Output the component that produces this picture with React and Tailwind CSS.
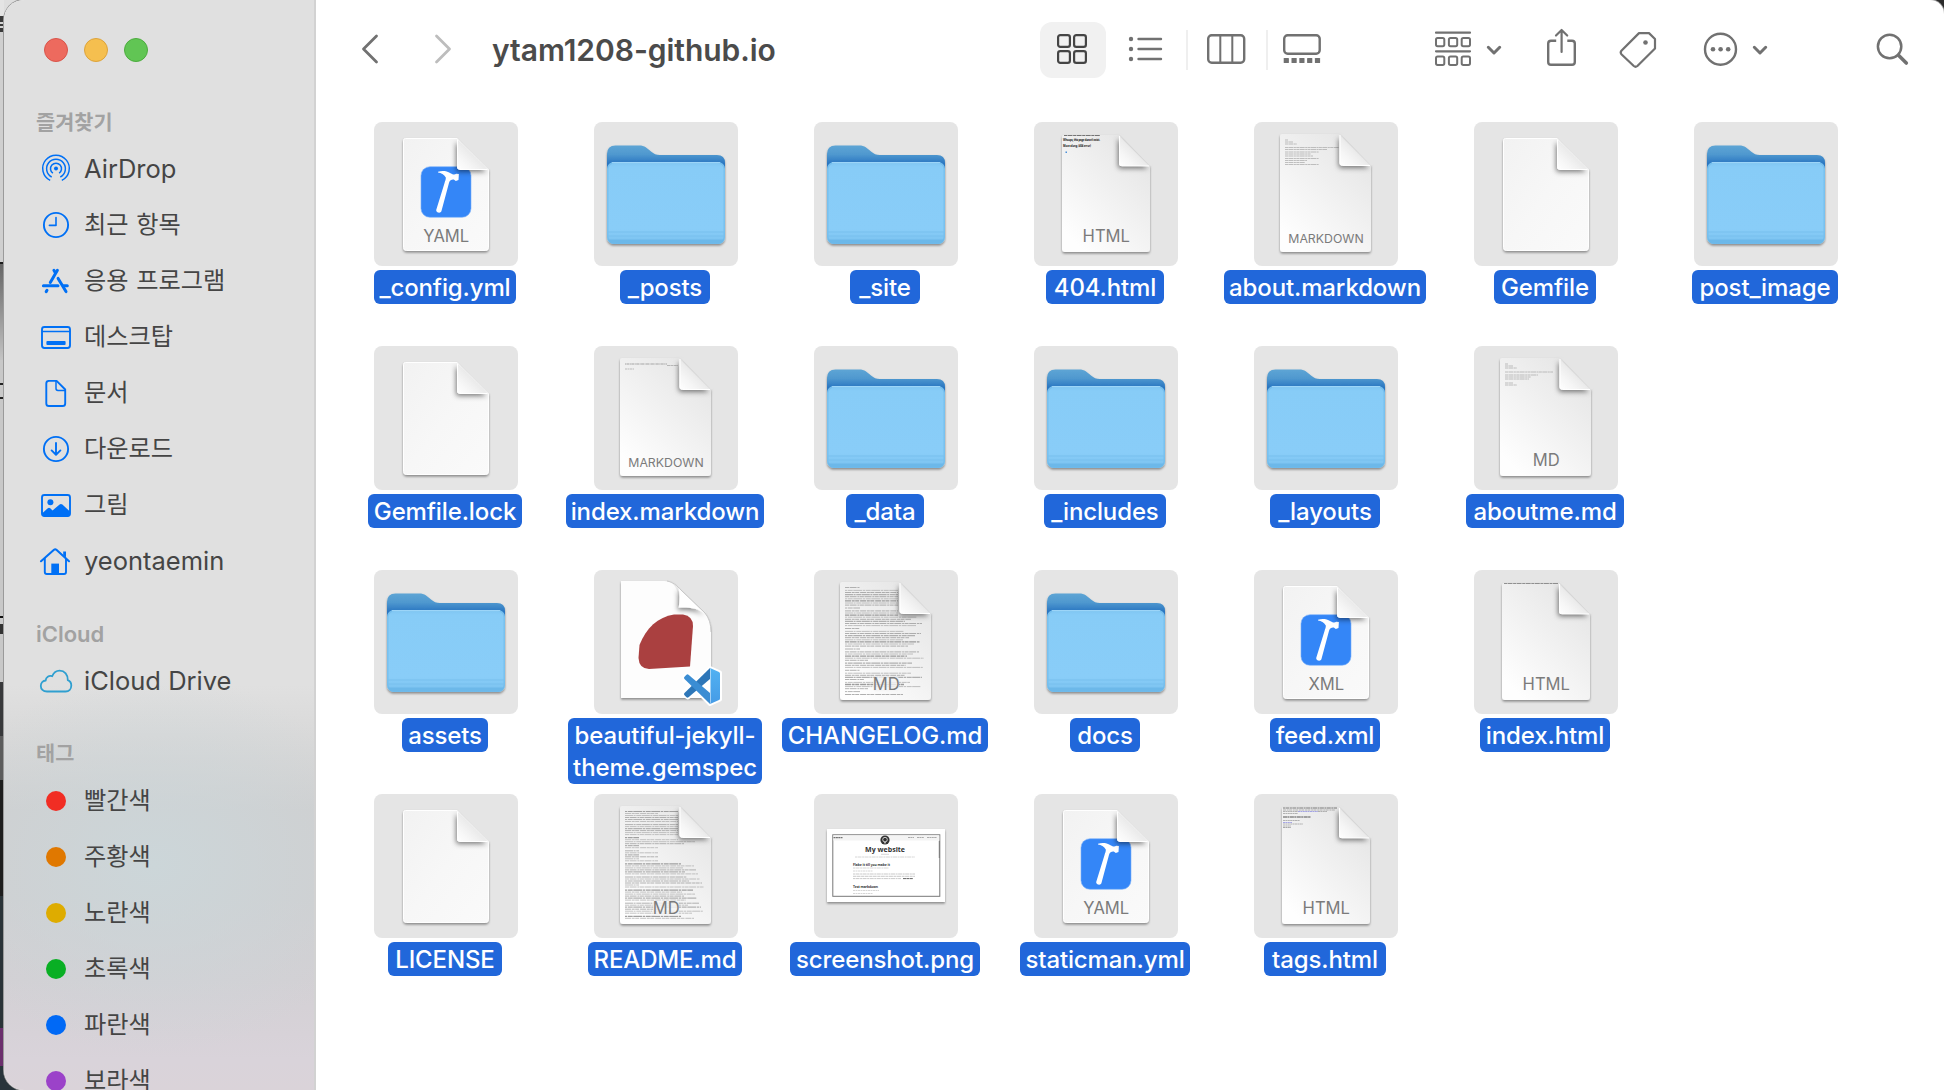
import React from "react";

const SANS = "font-['Inter','Noto_Sans_CJK_KR',sans-serif]";

/* ---------- sidebar icons (32 x 32) ---------- */

const line = { fill: "none", stroke: "currentColor", strokeWidth: 1.9, strokeLinecap: "round", strokeLinejoin: "round" };

const sideIcons = {
  airdrop: (
    <g {...line} strokeWidth="1.5" strokeLinecap="butt">
      <circle cx="16" cy="15.5" r="2" fill="currentColor" stroke="none" />
      <path d="M12.9 20.2a5.5 5.5 0 1 1 6.2 0" />
      <path d="M11.7 24a9.4 9.4 0 1 1 8.6 0" />
      <path d="M10.2 27.4a13.3 13.3 0 1 1 11.6 0" />
    </g>
  ),
  clock: (
    <g {...line}>
      <circle cx="16" cy="16" r="12.1" />
      <path d="M16 8.6V16.4H9.4" strokeWidth="1.6" />
    </g>
  ),
  apps: (
    <g fill="none" stroke="currentColor" strokeWidth="3" strokeLinecap="round">
      <path d="M17.4 5.3 10.3 17.5" />
      <path d="M13.9 5.3 15.2 7.5" />
      <path d="M18.1 13.4 26 26.6" />
      <path d="M3.4 20.8H18M23.5 20.8H27.3" />
      <path d="M7 25.3 6.2 26.6" />
    </g>
  ),
  desktop: (
    <g {...line}>
      <rect x="2" y="6" width="28" height="21" rx="2.4" />
      <path d="M2.5 10.4H29.5" strokeWidth="1.5" />
      <rect x="6.4" y="20" width="19.2" height="4" rx="1" fill="currentColor" stroke="none" />
    </g>
  ),
  doc: (
    <g {...line}>
      <path d="M8.3 3.9H16.6L25.2 12.5V26.4Q25.2 29 22.6 29H8.9Q6.3 29 6.3 26.4V6.4Q6.3 3.9 8.9 3.9Z" />
      <path d="M16 4.2V11.5Q16 13.4 18 13.4H25" strokeWidth="1.5" />
    </g>
  ),
  download: (
    <g {...line}>
      <circle cx="16" cy="16" r="12.1" />
      <path d="M16 10V21.4M11.6 17.4 16 21.7 20.4 17.4" />
    </g>
  ),
  picture: (
    <g>
      <rect x="2" y="6" width="28" height="21" rx="2.4" {...line} />
      <circle cx="10.4" cy="13.3" r="3" fill="currentColor" />
      <path d="M2 24.5 7.8 19.3Q9 18.3 10.2 19.3L12.6 21.4 19.6 15.4Q21 14.3 22.4 15.6L30 22.6V25Q30 27.4 27.6 27.4H4.4Q2 27.4 2 25Z" fill="currentColor" />
    </g>
  ),
  home: (
    <g {...line}>
      <path d="M1 16.2 14 4.8Q15.2 3.8 16.4 4.8L29 16.2" strokeWidth="2.1" />
      <path d="M4.8 13.6V27Q4.8 29 6.8 29H24Q26 29 26 27V13.6" />
      <path d="M23.2 6.4H26V12.6L23.2 10Z" fill="currentColor" stroke="none" />
      <path d="M11.3 18.6H19V29H11.3Z" fill="currentColor" stroke="none" />
    </g>
  ),
  cloud: (
    <path
      d="M7 26.5C3 26.5.8 24 .8 20.9.8 17.8 3 15.7 5.7 15.5 5.7 12.2 9 10 12.2 11.2 13.7 7.6 16.6 5.7 19.6 5.7 24.6 5.7 28 9.5 27.8 15.2 30.2 16.1 31.3 18.3 31.3 20.6 31.3 24 29 26.5 25.6 26.5Z"
      {...line}
      strokeWidth="1.8"
    />
  ),
};

const favorites = [
  ["airdrop", "AirDrop"],
  ["clock", "최근 항목"],
  ["apps", "응용 프로그램"],
  ["desktop", "데스크탑"],
  ["doc", "문서"],
  ["download", "다운로드"],
  ["picture", "그림"],
  ["home", "yeontaemin"],
];

const tags = [
  ["bg-[#f12d24]", "빨간색"],
  ["bg-[#e07800]", "주황색"],
  ["bg-[#deac00]", "노란색"],
  ["bg-[#09af24]", "초록색"],
  ["bg-[#0069f6]", "파란색"],
  ["bg-[#9b42c9]", "보라색"],
];

function SideLabel({ text }) {
  const latin = /^[A-Za-z ]+$/.test(text);
  return (
    <span
      className={
        latin
          ? "text-[25.5px] leading-none text-[#454545]"
          : "text-[24.2px] leading-none [word-spacing:1px] text-[#454545]"
      }
    >
      {text}
    </span>
  );
}

function SideRow({ icon, text, tone = "text-[#0070f5]" }) {
  return (
    <li className="flex h-14 items-center gap-3 pl-9">
      <svg viewBox="0 0 32 32" className={"h-8 w-8 shrink-0 overflow-visible " + tone}>{sideIcons[icon]}</svg>
      <SideLabel text={text} />
    </li>
  );
}

function SideHeading({ children, className = "" }) {
  return <h2 className={"flex h-10 shrink-0 items-center pl-8 pt-0.5 leading-none text-[#a2a2a2] " + className}>{children}</h2>;
}

function Sidebar() {
  return (
    <aside className="flex w-[312px] shrink-0 flex-col overflow-hidden border-r-2 border-[#d2d2d2] bg-[radial-gradient(230px_190px_at_150px_865px,rgba(204,214,217,1),rgba(204,214,217,0)),linear-gradient(180deg,#e0e0e0_0px,#e0e0e0_685px,#d9d9d9_735px,#cfcfd0_810px,#cfcfd1_900px,#d3d0d4_980px,#d9d3da_1060px,#dad3d9_1090px)]">
      <div className="flex h-[100px] shrink-0 items-center gap-4 pl-10">
        <i className="h-6 w-6 rounded-full border border-[#d9544a] bg-[#ed6a5e]" />
        <i className="h-6 w-6 rounded-full border border-[#dda33b] bg-[#f5bf4f]" />
        <i className="h-6 w-6 rounded-full border border-[#4cac3e] bg-[#61c554]" />
      </div>
      <SideHeading className="mt-0.5 text-[20.8px] font-bold">즐겨찾기</SideHeading>
      <ul className="-mt-px shrink-0">
        {favorites.map(([icon, text]) => (
          <SideRow key={text} icon={icon} text={text} />
        ))}
      </ul>
      <SideHeading className="mt-6 text-[22px] font-semibold">iCloud</SideHeading>
      <ul className="shrink-0">
        <SideRow icon="cloud" text="iCloud Drive" tone="text-[#2f9fd0]" />
      </ul>
      <SideHeading className="mt-6 text-[20.8px] font-bold">태그</SideHeading>
      <ul className="shrink-0">
        {tags.map(([color, text]) => (
          <li key={text} className="flex h-14 items-center gap-[18px] pl-[42px]">
            <i className={"h-5 w-5 rounded-full " + color} />
            <SideLabel text={text} />
          </li>
        ))}
      </ul>
    </aside>
  );
}

/* ---------- toolbar ---------- */

function Tool({ x, w, className = "", children }) {
  return (
    <svg viewBox={`${x} 0 ${w} 98`} width={w} height="98" className={"shrink-0 text-[#717171] " + className} fill="none" stroke="currentColor" strokeWidth="2.4" strokeLinecap="round" strokeLinejoin="round">
      {children}
    </svg>
  );
}

function Toolbar() {
  return (
    <header className="flex h-[98px] shrink-0 items-center">
      <Tool x={356} w={28} className="ml-10">
        <path d="M376.5 36 363.5 49 376.5 62" strokeWidth="2.8" />
      </Tool>
      <Tool x={430} w={28} className="ml-[46px]">
        <path d="M436.5 36 449.5 49 436.5 62" strokeWidth="2.8" stroke="#bdbdbd" />
      </Tool>
      <h1 className="ml-[34px] w-[548px] whitespace-nowrap pt-0.5 text-[30px] font-semibold leading-none tracking-[-0.05px] text-[#4b4b4b]">ytam1208-github.io</h1>
      <div className="mt-0.5 flex h-14 w-[66px] shrink-0 items-center rounded-xl bg-[#f1f1f1] pl-[17px]">
        <svg viewBox="0 0 30 30" className="mb-0.5 h-[30px] w-[30px]" fill="none" stroke="#454545" strokeWidth="2.2">
          <rect x="1.1" y="1.1" width="11.8" height="11.8" rx="2.2" />
          <rect x="17.1" y="1.1" width="11.8" height="11.8" rx="2.2" />
          <rect x="1.1" y="17.1" width="11.8" height="11.8" rx="2.2" />
          <rect x="17.1" y="17.1" width="11.8" height="11.8" rx="2.2" />
        </svg>
      </div>
      <Tool x={1126} w={40} className="ml-5">
        {[39, 49, 59].map((y) => (
          <g key={y}>
            <circle cx="1131" cy={y} r="2.2" fill="currentColor" stroke="none" />
            <path d={`M1138.5 ${y}H1161`} />
          </g>
        ))}
      </Tool>
      <i className="ml-5 mt-0.5 h-10 w-0.5 bg-[#efefef]" />
      <Tool x={1206} w={40} className="ml-[18px]">
        <rect x="1208.2" y="35.2" width="36" height="27.6" rx="3.5" />
        <path d="M1220.3 35V63M1232.3 35V63" strokeWidth="2" />
      </Tool>
      <i className="ml-5 mt-0.5 h-10 w-0.5 bg-[#efefef]" />
      <Tool x={1282} w={40} className="ml-[14px]">
        <rect x="1284.2" y="35.2" width="35.5" height="18.5" rx="3.5" />
        {[1283.7, 1291.5, 1299.3, 1307.1, 1314.9].map((x) => (
          <rect key={x} x={x} y="57.9" width="5.2" height="5.2" rx="0.6" fill="currentColor" stroke="none" />
        ))}
      </Tool>
      <Tool x={1434} w={70} className="ml-[112px]">
        <path d="M1436 32.7H1470M1436 51.3H1470" strokeWidth="2.2" />
        {[37.9, 56.6].map((y) =>
          [1436, 1448.9, 1461.7].map((x) => <rect key={x + y} x={x} y={y} width="8.3" height="8.3" rx="1.6" strokeWidth="2" />)
        )}
        <path d="M1488.3 47.3 1494 53 1499.7 47.3" strokeWidth="3" />
      </Tool>
      <Tool x={1544} w={36} className="ml-10">
        <path d="M1556.2 40.7H1551Q1548.2 40.7 1548.2 43.5V62Q1548.2 64.8 1551 64.8H1572Q1574.8 64.8 1574.8 62V43.5Q1574.8 40.7 1572 40.7H1567.3" strokeLinecap="butt" />
        <path d="M1561.6 52V30.6M1556 35.5 1561.6 30 1567.2 35.5" strokeWidth="2.2" />
      </Tool>
      <Tool x={1618} w={42} className="ml-[38px]">
        <path d="M1639 33.1H1649L1655 39V48.5L1637.4 66Q1635.5 67.5 1633.8 66L1621.4 54.2Q1620 52.5 1621.4 50.8Z" strokeWidth="2.2" />
        <circle cx="1645.5" cy="42.5" r="2.3" fill="currentColor" stroke="none" />
      </Tool>
      <Tool x={1702} w={68} className="ml-[42px]">
        <circle cx="1720.5" cy="49.2" r="15.5" />
        {[1713, 1720.6, 1728.2].map((x) => (
          <circle key={x} cx={x} cy="49.2" r="2.3" fill="currentColor" stroke="none" />
        ))}
        <path d="M1754.3 47.3 1760 53 1765.7 47.3" strokeWidth="3" />
      </Tool>
      <Tool x={1874} w={38} className="ml-[104px]">
        <circle cx="1889.6" cy="46.5" r="11.7" strokeWidth="2.5" />
        <path d="M1898.5 55.3 1906.3 63" strokeWidth="3.6" />
      </Tool>
    </header>
  );
}

/* ---------- file previews (144 x 144) ---------- */

function Defs() {
  return (
    <svg className="absolute h-0 w-0" aria-hidden="true">
      <defs>
        <linearGradient id="paper" x1="0.9" y1="0.15" x2="0.25" y2="1">
          <stop offset="0" stopColor="#e6e6e6" />
          <stop offset="1" stopColor="#fefefe" />
        </linearGradient>
        <linearGradient id="plain" x1="0" y1="0" x2="1" y2="1">
          <stop offset="0" stopColor="#f2f2f2" />
          <stop offset="0.5" stopColor="#f7f7f7" />
          <stop offset="1" stopColor="#fafafa" />
        </linearGradient>
        <linearGradient id="fold" x1="0" y1="1" x2="0.55" y2="0.45">
          <stop offset="0" stopColor="#ffffff" />
          <stop offset="0.5" stopColor="#f5f5f5" />
          <stop offset="1" stopColor="#e8e8e8" />
        </linearGradient>
        <linearGradient id="folderBack" x1="0" y1="0" x2="0" y2="1">
          <stop offset="0" stopColor="#5ea5d5" />
          <stop offset="0.1" stopColor="#4f98cf" />
          <stop offset="0.2" stopColor="#2a76c1" />
          <stop offset="1" stopColor="#2a76c1" />
        </linearGradient>
        <linearGradient id="folderFront" x1="0" y1="0" x2="0" y2="1">
          <stop offset="0" stopColor="#7ec5f2" />
          <stop offset="0.06" stopColor="#87ccf7" />
          <stop offset="0.82" stopColor="#89cdf8" />
          <stop offset="1" stopColor="#79c1ef" />
        </linearGradient>
        <linearGradient id="codeWing" x1="0" y1="0" x2="0" y2="1">
          <stop offset="0" stopColor="#52b2f2" />
          <stop offset="1" stopColor="#459be6" />
        </linearGradient>
        <filter id="drop" x="-20%" y="-20%" width="140%" height="140%">
          <feDropShadow dx="0" dy="1.6" stdDeviation="1.3" floodColor="#000" floodOpacity="0.4" />
        </filter>
        <filter id="soft" x="-40%" y="-40%" width="180%" height="180%">
          <feDropShadow dx="-1" dy="2.4" stdDeviation="2.6" floodColor="#000" floodOpacity="0.5" />
        </filter>
      </defs>
    </svg>
  );
}

function Folder() {
  return (
    <g filter="url(#drop)">
      <path d="M13 32Q13 23.4 21.5 23.4H45C51 23.4 53 26 57 29.5 60 32 62 33 66 33H123Q131 33 131 41V114H13Z" fill="url(#folderBack)" />
      <rect x="13" y="40" width="118" height="82" rx="7" fill="url(#folderFront)" />
      <rect x="13.8" y="40.6" width="116.4" height="80.8" rx="6.5" fill="none" stroke="#6db8e8" strokeOpacity="0.6" strokeWidth="1.4" />
      <path d="M18 40.7H126" stroke="#a5dafa" strokeWidth="1" />
      <path d="M14 110H130M14 114H130" stroke="#78c0ee" strokeWidth="1.2" />
      <path d="M14 117.5H130V116Q130 121.5 124 121.5H20Q14 121.5 14 116Z" fill="#6cb8e9" />
    </g>
  );
}

const label = { textAnchor: "middle", fill: "#7b7b7b", fontFamily: "Inter, sans-serif" };

function Paper({ box, foldX, foldY, fill, edge, children, text, small }) {
  const [l, t, r, b] = box;
  return (
    <g>
      <path
        filter="url(#drop)"
        d={`M${l + 2} ${t}H${foldX}L${r} ${foldY}V${b - 3}Q${r} ${b} ${r - 3} ${b}H${l + 3}Q${l} ${b} ${l} ${b - 3}V${t + 2}Q${l} ${t} ${l + 2} ${t}Z`}
        fill={fill}
        stroke={edge ? "#fff" : "none"}
        strokeWidth="1"
      />
      {children}
      <path filter="url(#soft)" d={`M${foldX} ${t + 1}V${foldY - 3}Q${foldX} ${foldY} ${foldX + 3} ${foldY}H${r - 1}Z`} fill="url(#fold)" />
      <path d={`M${foldX + 0.5} ${t + 1}V${foldY - 3}Q${foldX} ${foldY} ${foldX + 3} ${foldY}H${r - 1}`} fill="none" stroke="#fff" strokeWidth="1" />
      <path d={`M${foldX + 0.6} ${t - 0.8}H${r + 2}V${foldY - 0.5}H${r - 0.4}Z`} fill="#e5e5e5" />
      {text && (
        <text x={small ? 72 : 72.3} y={small ? 121 : 120.4} fontSize={small ? 12.3 : 16.6} {...label}>
          {text}
        </text>
      )}
    </g>
  );
}

/* Rows of minute print: [x, y, length, dash, weight, colour] */
function Print({ rows }) {
  return rows.map(([x, y, len, dash = "3 .6 5 .7 2 .8", w = 0.9, c = "#8f8f8f"], i) => (
    <path key={i} d={`M${x} ${y}h${len}`} stroke={c} strokeWidth={w} strokeDasharray={dash} />
  ));
}

const dashes = ["4 .6 7 .8 2 .5", "2 .7 5 .6 9 .7", "6 .7 3 .5 4 .9", "8 .6 2 .7 5 .5"];
const besideFold = (y, len) => (y < 46 ? Math.min(len, 53) : len);

const changelog = [];
for (let i = 0, y = 17.5; y < 126; i++) {
  const head = i % 9 === 0 || (i > 30 && i % 4 === 0);
  const len = head ? 15 + (i % 3) * 4 : 58 + ((i * 17) % 23);
  changelog.push([31, y, besideFold(y, len), dashes[i % 4], head ? 0.8 : i % 3 === 0 ? 1.3 : 0.8, head ? "#a0a0a0" : i % 2 ? "#b0b0b0" : "#9c9c9c"]);
  y += head || i % 9 === 8 ? 2.9 : 2.1;
}
const readme = [];
for (let i = 0, y = 17.5; y < 126; i++) {
  const short = (y > 50 && y < 68) || i % 11 === 1;
  const len = short ? 14 + ((i * 19) % 38) : 56 + ((i * 13) % 24);
  readme.push([31, y, besideFold(y, len), dashes[(i + 1) % 4], i % 4 === 0 ? 1.2 : 0.8, i % 3 ? "#b2b2b2" : "#a0a0a0"]);
  y += i % 6 === 5 ? 3.1 : 2;
}

const print = {
  changelog,
  readme,
  about: [
    [31, 18, 3], [31, 20, 8], [31, 22, 12],
    [31, 25.5, 54], [31, 27.5, 42], [31, 30, 34], [31, 32, 26], [31, 34, 28],
    [31, 36.5, 34], [31, 38.5, 22], [31, 40.5, 20], [31, 42.5, 34],
  ].map((r) => [...r, "3 .4 5 .5 2 .4", 0.7, "#a8a8a8"]),
  aboutme: [
    [31, 18, 3], [31, 20, 8], [31, 22, 12], [31, 26, 48], [31, 29, 33], [31, 31, 26], [31, 33, 24], [31, 37, 8], [31, 39, 12],
  ].map((r) => [...r, "3 .4 5 .5 2 .4", 0.7, "#a8a8a8"]),
  index: [[31, 18, 42, "1 .4 3 .5", 1.6, "#bdbdbd"], [73, 19.5, 11, "3 .4", 0.8, "#aaa"], [31, 23, 9, "2 .5", 1, "#bbb"]],
  indexHtml: [[30, 13.5, 54, "3 .5 5 .6", 0.8, "#777"]],
  tags: [
    [29, 14, 54, "2 .4 4 .5", 1, "#777"], [29, 16, 52, "3 .7 2 .4", 0.6, "#888"], [29, 17.5, 15, "2 .4", 0.6, "#888"],
    [44, 17.5, 20, "2 .4", 0.7, "#8585e0"], [64, 17.5, 9, "2 .4", 0.6, "#888"], [29, 19.5, 15, "2 .4", 0.6, "#888"],
    [29, 23, 28, "4 .4 2 .5", 1.1, "#555"], [29, 26.5, 17, "2 .4", 0.6, "#888"], [29, 28.5, 9, "2 .4", 0.7, "#8585e0"],
    [29, 30, 20, "2 .4", 0.6, "#888"], [29, 32, 8, "2 .4", 0.6, "#888"], [29, 33.5, 8, "2 .4", 0.6, "#777"],
  ],
  notFound: [[30, 13.5, 36, "3 .5 5 .6", 0.9, "#666"]],
};

const MD_BOX = [26, 12, 117, 130];
const HTML_BOX = [28, 13, 116, 130];
const PLAIN_BOX = [29.5, 16.5, 114.5, 128.5];

function Preview({ kind, text, rows }) {
  if (kind === "folder") return <Folder />;
  if (kind === "plain") return <Paper box={PLAIN_BOX} foldX={83} foldY={47.5} fill="url(#plain)" edge />;
  if (kind === "xcode")
    return (
      <Paper box={PLAIN_BOX} foldX={83} foldY={47.5} fill="url(#plain)" edge text={text}>
        <rect x="47" y="44.7" width="50" height="50.6" rx="9" fill="#3486f7" stroke="#7ab0fa" strokeWidth="0.6" />
        <path d="M64 49.8C68 48.6 72.5 48.8 76.5 51.2 79 52.5 80.2 53.2 82.3 51.8L84.9 52.1 84.5 58 81.8 59C80.5 57.5 79 57 77 58 75.6 58.8 75.2 60.2 74.7 62L67.4 89.3C66.6 91.7 61.8 90.6 62.2 88L70.4 61.5C71.2 58.5 72 57.5 71.8 55.5 70.2 52.5 67.2 50.8 64 50.6Z" fill="#fff" />
      </Paper>
    );
  if (kind === "html")
    return (
      <Paper box={HTML_BOX} foldX={85} foldY={44} fill="url(#paper)" text="HTML">
        <Print rows={print[rows]} />
        {rows === "notFound" && (
          <g fontFamily="Open Sans, sans-serif" fontWeight="700" fill="#222">
            <text x="29" y="19" fontSize="2.7" textLength="37">Whoops, this page doesn't exist.</text>
            <text x="29" y="25" fontSize="2.7" textLength="28">Move along. (404 error)</text>
            <rect x="31.5" y="29.5" width="1.5" height="1.5" fill="#4a8fd8" />
          </g>
        )}
      </Paper>
    );
  if (kind === "md")
    return (
      <Paper box={MD_BOX} foldX={85.5} foldY={43.5} fill="url(#paper)" text={text} small={text === "MARKDOWN"}>
        <Print rows={print[rows]} />
        {(rows === "changelog" || rows === "readme") && <rect x="59" y="106.5" width="26" height="15" rx="3" fill="#f4f4f4" opacity="0.8" />}
      </Paper>
    );
  if (kind === "ruby")
    return (
      <g>
        <path filter="url(#drop)" d="M27 11H70C80 11 84 16 88 21L111 43C115 48 117 54 117 62V128H27Z" fill="#fdfdfd" />
        <path d="M70 11C82 12 85 20 84.5 37 84.5 37 103 35 112 45L88 21C84 16 80 11 70 11Z" fill="#ececec" />
        <path filter="url(#soft)" d="M84.5 18C86 24 85.5 30 84.8 37.5 95 37 104 38 111 43.5Z" fill="#fff" />
        <path d="M85 17.5 112 44V10H80Z" fill="#e5e5e5" />
        <path d="M73 11C79 12 83 15.5 87 20L111 43C115 48 117 54 117 62" fill="none" stroke="#bdbdbd" strokeWidth="0.8" />
        <path d="M80 44.5H89Q99 46 99 56L96 96.5 55 99Q45 98.5 44.5 88L45.5 75C52 58 64 47 80 44.5Z" fill="#aa4040" />
        <g strokeLinejoin="round">
          <path d="M116 98 126 102.5V129.5L116 134 103 121 94 127.5 90 125V122L96 116 90 110V107L94 104.5 103 111Z" fill="#fff" stroke="#fff" strokeWidth="4" />
          <path d="M116 98V109L94.5 127.3Q93.5 128 92.5 127.2L90.3 125Q89.5 124 90.5 123Z" fill="#2d76b8" />
          <path d="M116 134V123L94.5 104.7Q93.5 104 92.5 104.8L90.3 107Q89.5 108 90.5 109Z" fill="#3b8dd3" />
          <path d="M116 98 125 102Q126 102.5 126 103.5V128.5Q126 129.5 125 130L116 134Q116.5 133 116.5 131V101Q116.5 99 116 98Z" fill="url(#codeWing)" />
        </g>
      </g>
    );
  return (
    <g fontFamily="Open Sans, sans-serif">
      <rect x="13" y="35" width="118" height="73" fill="#fff" filter="url(#drop)" />
      <rect x="18.8" y="40.8" width="107" height="61.5" fill="#fff" stroke="#777" strokeWidth="1" />
      <rect x="19.3" y="41.3" width="106" height="5.2" fill="#f4f4f4" />
      <Print rows={[[19.5, 43.7, 9, "2 .4", 1, "#555"], [94, 43.5, 6, "2 .4", 0.8, "#999"], [103, 43.5, 7, "2 .4", 0.8, "#999"], [113, 43.5, 10, "2 .4", 0.8, "#999"]]} />
      <path d="M125.3 47V64" stroke="#777" strokeWidth="1" />
      <circle cx="71" cy="46" r="4.6" fill="#333" />
      <circle cx="71" cy="45.6" r="2.3" fill="none" stroke="#ddd" strokeWidth="0.9" />
      <path d="M70 48.8h2" stroke="#ddd" strokeWidth="1" />
      <text x="71" y="57.5" fontSize="7" fontWeight="700" textAnchor="middle" textLength="40" fill="#333">My website</text>
      <path d="M67 60.3h8" stroke="#ccc" strokeWidth="0.8" />
      <Print rows={[[41, 63, 60, "2 .5 4 .6", 0.8, "#ccc"], [39, 74, 36, "2 .5 4 .6", 0.8, "#ccc"], [39, 77, 20, "2 .5", 0.8, "#ccc"], [39, 80, 62, "2 .5 4 .6", 0.8, "#bbb"], [39, 82.3, 62, "3 .5 4 .6", 0.8, "#bbb"], [39, 84.6, 48, "2 .5 4 .6", 0.8, "#bbb"], [89, 84.6, 10, "3 .4", 1, "#666"], [39, 96.5, 26, "2 .5", 0.8, "#ccc"], [39, 99.5, 20, "2 .5", 0.8, "#ccc"]]} />
      <text x="39" y="71.5" fontSize="3.4" fontWeight="700" textLength="37" fill="#333">Flake it till you make it</text>
      <text x="39" y="94.3" fontSize="3.4" fontWeight="700" textLength="25" fill="#333">Test markdown</text>
    </g>
  );
}

const files = [
  [
    { name: "_config.yml", w: 142, kind: "xcode", text: "YAML" },
    { name: "_posts", w: 90, kind: "folder" },
    { name: "_site", w: 70, kind: "folder" },
    { name: "404.html", w: 118, kind: "html", rows: "notFound" },
    { name: "about.markdown", w: 202, kind: "md", text: "MARKDOWN", rows: "about" },
    { name: "Gemfile", w: 102, kind: "plain" },
    { name: "post_image", w: 146, kind: "folder" },
  ],
  [
    { name: "Gemfile.lock", w: 154, kind: "plain" },
    { name: "index.markdown", w: 198, kind: "md", text: "MARKDOWN", rows: "index" },
    { name: "_data", w: 78, kind: "folder" },
    { name: "_includes", w: 122, kind: "folder" },
    { name: "_layouts", w: 110, kind: "folder" },
    { name: "aboutme.md", w: 158, kind: "md", text: "MD", rows: "aboutme" },
  ],
  [
    { name: "assets", w: 86, kind: "folder" },
    { name: "beautiful-jekyll-\ntheme.gemspec", w: 194, kind: "ruby" },
    { name: "CHANGELOG.md", w: 206, kind: "md", text: "MD", rows: "changelog" },
    { name: "docs", w: 70, kind: "folder" },
    { name: "feed.xml", w: 110, kind: "xcode", text: "XML" },
    { name: "index.html", w: 130, kind: "html", rows: "indexHtml" },
  ],
  [
    { name: "LICENSE", w: 114, kind: "plain" },
    { name: "README.md", w: 154, kind: "md", text: "MD", rows: "readme" },
    { name: "screenshot.png", w: 190, kind: "image" },
    { name: "staticman.yml", w: 170, kind: "xcode", text: "YAML" },
    { name: "tags.html", w: 122, kind: "html", rows: "tags" },
  ],
];

function FileItem({ name, w, ...preview }) {
  return (
    <li className="flex h-56 w-[220px] flex-col items-center">
      <div className="h-36 w-36 shrink-0 rounded-lg bg-[#e5e5e5]">
        <svg viewBox="0 0 144 144" className="block h-36 w-36">
          <Preview {...preview} />
        </svg>
      </div>
      <div
        className="mr-0.5 mt-1 shrink-0 whitespace-pre rounded-md bg-[#2167da] pt-0.5 text-center text-[24px] font-medium leading-8 tracking-[-0.12px] text-white"
        style={{ width: w }}
      >
        {name}
      </div>
    </li>
  );
}

function DesktopSliver() {
  return (
    <div className="flex h-full w-1 shrink-0 flex-col overflow-hidden">
      <div className="h-4 bg-[#e4e4e4]" />
      <div className="h-1.5 bg-[#3a3a3a]" />
      <div className="h-0.5 bg-[#d4d4d4]" />
      <div className="h-0.5 bg-[#3a3a3a]" />
      <div className="h-0.5 bg-[#d4d4d4]" />
      <div className="h-1 bg-[#3a3a3a]" />
      <div className="h-[230px] bg-[#cfcfcf]" />
      <div className="h-0.5 bg-[#1c1c1c]" />
      <div className="h-[96px] bg-linear-to-b from-[#666] to-[#c4c4c4]" />
      <div className="h-[23px] bg-[#c8c8c8]" />
      <div className="h-0.5 bg-[#222]" />
      <div className="h-3 bg-[#c8c8c8]" />
      <div className="h-0.5 bg-[#222]" />
      <div className="h-[217px] bg-[#c8c8c8]" />
      <div className="h-0.5 bg-[#111]" />
      <div className="h-1.5 bg-[#ccc]" />
      <div className="h-2.5 bg-[#333]" />
      <div className="h-12 bg-[#c8c8c8]" />
      <div className="h-[54px] bg-[#38393b]" />
      <div className="h-11 bg-[#5c5c5c]" />
      <div className="h-[116px] bg-[#1d1d1d]" />
      <div className="h-[132px] bg-[#2a3338]" />
      <div className="h-[38px] bg-[#6b2f6d]" />
      <div className="grow bg-[#28343b]" />
    </div>
  );
}

export default function App() {
  return (
    <div className={"flex h-[1090px] w-[1944px] overflow-hidden bg-[linear-gradient(180deg,#dedede_0,#dedede_50%,#28343b_50%)] " + SANS}>
      <Defs />
      <DesktopSliver />
      <div className="flex grow bg-[linear-gradient(90deg,transparent_50%,#2b2b2b_50%)]">
        <div className="flex grow overflow-hidden rounded-l-[20px] rounded-tr-[14px] bg-white shadow-[0_0_0_1px_#9a9a9a]">
          <Sidebar />
          <main className="flex grow flex-col">
            <Toolbar />
            <div className="pl-5 pt-6">
              {files.map((row) => (
                <ul key={row[0].name} className="flex h-56">
                  {row.map((f) => (
                    <FileItem key={f.name} {...f} />
                  ))}
                </ul>
              ))}
            </div>
          </main>
        </div>
      </div>
    </div>
  );
}
